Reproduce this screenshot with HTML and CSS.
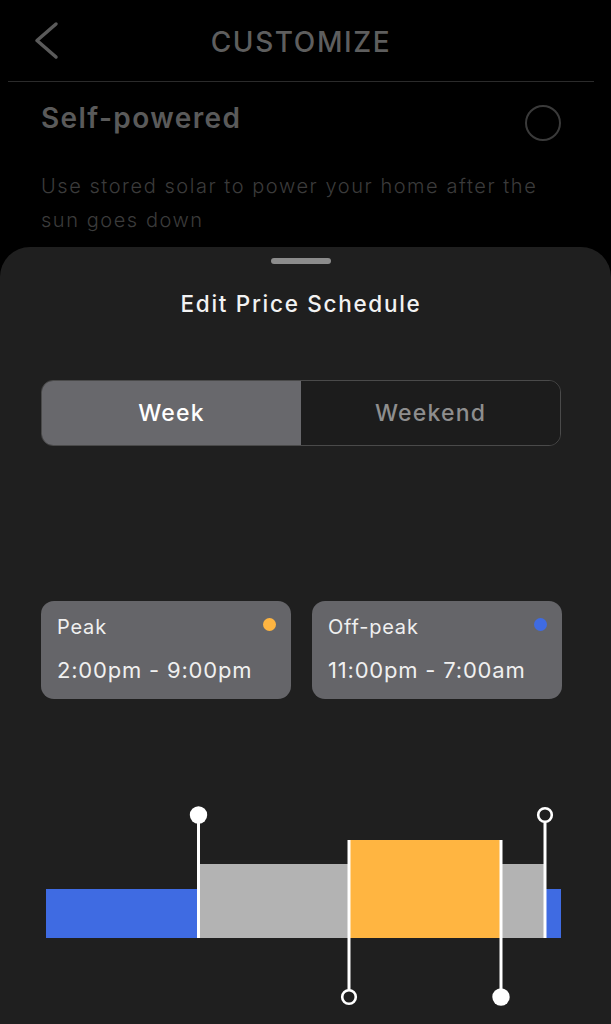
FILE: index.html
```html
<!DOCTYPE html>
<html>
<head>
    <title>Customize</title>
    <link rel="stylesheet" href="styles.css">
</head>
<body>
    <div class="page">
        <div class="header">
            <div class="back">
                <svg width="26" height="40" viewBox="0 0 26 40">
                    <path d="M22 3 L3 19.5 L22 36" fill="none" stroke="#5a5a5a" stroke-width="3.5" stroke-linecap="round" stroke-linejoin="round"/>
                </svg>
            </div>
            <div class="header-title">CUSTOMIZE</div>
            <div></div>
        </div>

        <div class="option">
            <div class="option-name">Self-powered</div>
            <div class="radio"></div>
        </div>
        <p class="option-desc">Use stored solar to power your home after the sun goes down</p>

        <div class="sheet">
            <div class="sheet-head">
                <div class="handle"></div>
                <h2 class="sheet-title">Edit Price Schedule</h2>
            </div>

            <div class="segment">
                <div class="segment-item active">Week</div>
                <div class="segment-item">Weekend</div>
            </div>

            <div class="cards">
                <div class="card">
                    <div class="card-head">
                        <span>Peak</span>
                        <span class="dot peak"></span>
                    </div>
                    <div class="card-time">2:00pm - 9:00pm</div>
                </div>
                <div class="card">
                    <div class="card-head">
                        <span>Off-peak</span>
                        <span class="dot offpeak"></span>
                    </div>
                    <div class="card-time">11:00pm - 7:00am</div>
                </div>
            </div>

            <svg class="chart" width="611" height="224" viewBox="0 800 611 224">
                <rect x="46" y="889" width="515" height="49" fill="#3f6be2"/>
                <rect x="199" y="864" width="345" height="74" fill="#b3b3b3"/>
                <rect x="349" y="840" width="152" height="98" fill="#ffb541"/>

                <line x1="198.5" y1="815" x2="198.5" y2="938" stroke="#fff" stroke-width="3"/>
                <line x1="545" y1="815" x2="545" y2="938" stroke="#fff" stroke-width="3"/>
                <line x1="349" y1="840" x2="349" y2="997" stroke="#fff" stroke-width="3"/>
                <line x1="501" y1="840" x2="501" y2="997" stroke="#fff" stroke-width="3"/>

                <circle cx="198.5" cy="815" r="8.7" fill="#fff"/>
                <circle cx="545" cy="815" r="6.8" fill="#1f1f1f" stroke="#fff" stroke-width="2.6"/>
                <circle cx="349" cy="997" r="6.8" fill="#1f1f1f" stroke="#fff" stroke-width="2.6"/>
                <circle cx="501" cy="997" r="8.7" fill="#fff"/>
            </svg>
        </div>
    </div>
</body>
</html>
```

FILE: styles.css
```css
body {
    margin: 0;
    background-color: #000;
    font-family: Inter, "Noto Sans", sans-serif;
    overflow: hidden;
}

.page {
    width: 611px;
    height: 1024px;
    overflow: hidden;
}

.header {
    display: grid;
    grid-template-columns: 1fr auto 1fr;
    align-items: center;
    height: 81px;
    margin: 0 17px 0 8px;
    border-bottom: 1px solid #2b2b2b;
}

.back {
    padding-left: 26px;
    display: flex;
}

.header-title {
    color: #5e5e5e;
    font-size: 28px;
    font-weight: 500;
    letter-spacing: 1.6px;
    padding-top: 2px;
}

.option {
    display: flex;
    justify-content: space-between;
    align-items: flex-start;
    height: 34px;
    margin-top: 19px;
    padding: 0 50px 0 41px;
}

.option-name {
    color: #5a5a5a;
    font-size: 28px;
    font-weight: 600;
    line-height: 34px;
    letter-spacing: 1.4px;
}

.radio {
    width: 32px;
    height: 32px;
    margin-top: 4px;
    border: 2px solid #3a3a3a;
    border-radius: 50%;
}

.option-desc {
    margin: 34px 0 0;
    padding: 0 60px 0 41px;
    color: #3b3b3b;
    font-size: 20px;
    font-weight: 300;
    line-height: 34.4px;
    letter-spacing: 1.55px;
}

.sheet {
    margin-top: 9px;
    height: 777px;
    background-color: #1f1f1f;
    border-radius: 30px 30px 0 0;
    padding-top: 11px;
    box-sizing: border-box;
}

.sheet-head {
    padding-right: 9px;
}

.handle {
    width: 60px;
    height: 6px;
    margin: 0 auto;
    background-color: #8c8c8c;
    border-radius: 3px;
}

.sheet-title {
    margin: 25px 0 0;
    text-align: center;
    color: #f2f2f2;
    font-size: 22.5px;
    font-weight: 500;
    line-height: 30px;
    letter-spacing: 1.7px;
}

.segment {
    display: grid;
    grid-template-columns: 1fr 1fr;
    height: 66px;
    margin: 61px 50px 0 41px;
    border: 1px solid #4a4a4a;
    border-radius: 12px;
    overflow: hidden;
    box-sizing: border-box;
}

.segment-item {
    display: flex;
    align-items: center;
    justify-content: center;
    color: #8e8e8e;
    background-color: #1c1c1c;
    font-size: 23px;
    font-weight: 500;
    letter-spacing: 1.2px;
}

.segment-item.active {
    color: #fff;
    background-color: #68686c;
}

.cards {
    display: grid;
    grid-template-columns: 250px 250px;
    gap: 21px;
    margin: 155px 0 0 41px;
}

.card {
    height: 98px;
    padding: 14px 15px 0 16px;
    background-color: #656569;
    border-radius: 13px;
    box-sizing: border-box;
    color: #f0f0f0;
}

.card-head {
    display: flex;
    justify-content: space-between;
    align-items: flex-start;
    font-size: 20px;
    line-height: 24px;
    letter-spacing: 0.8px;
}

.dot {
    width: 13px;
    height: 13px;
    margin-top: 3px;
    border-radius: 50%;
}

.dot.peak {
    background-color: #ffb541;
}

.dot.offpeak {
    background-color: #3f6be2;
}

.card-time {
    margin-top: 18px;
    font-size: 22px;
    line-height: 26px;
    letter-spacing: 0.8px;
}

.chart {
    display: block;
    margin-top: 101px;
}
```
